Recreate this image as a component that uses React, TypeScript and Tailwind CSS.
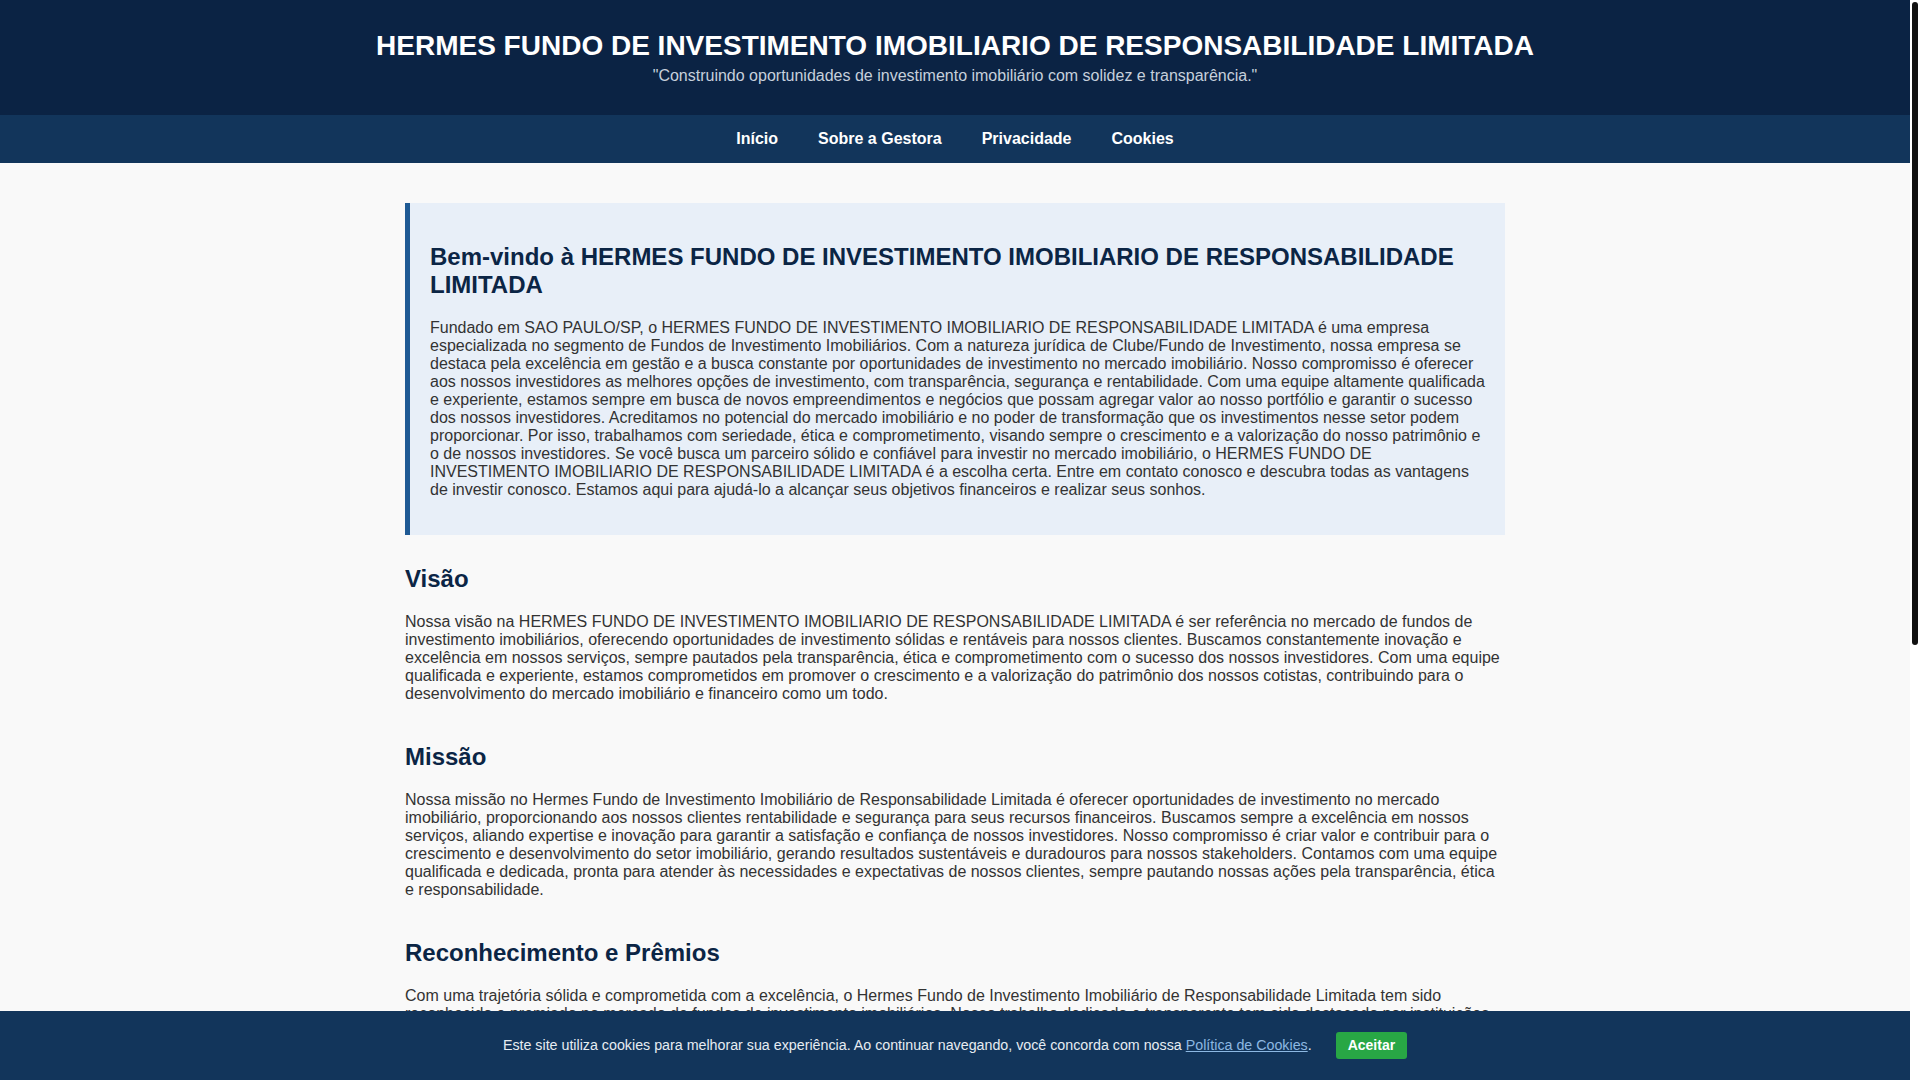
import { useState } from 'react';

const NOME = 'HERMES FUNDO DE INVESTIMENTO IMOBILIARIO DE RESPONSABILIDADE LIMITADA';

const sections = [
  {
    title: 'Visão',
    text: `Nossa visão na ${NOME} é ser referência no mercado de fundos de investimento imobiliários, oferecendo oportunidades de investimento sólidas e rentáveis para nossos clientes. Buscamos constantemente inovação e excelência em nossos serviços, sempre pautados pela transparência, ética e comprometimento com o sucesso dos nossos investidores. Com uma equipe qualificada e experiente, estamos comprometidos em promover o crescimento e a valorização do patrimônio dos nossos cotistas, contribuindo para o desenvolvimento do mercado imobiliário e financeiro como um todo.`,
  },
  {
    title: 'Missão',
    text: 'Nossa missão no Hermes Fundo de Investimento Imobiliário de Responsabilidade Limitada é oferecer oportunidades de investimento no mercado imobiliário, proporcionando aos nossos clientes rentabilidade e segurança para seus recursos financeiros. Buscamos sempre a excelência em nossos serviços, aliando expertise e inovação para garantir a satisfação e confiança de nossos investidores. Nosso compromisso é criar valor e contribuir para o crescimento e desenvolvimento do setor imobiliário, gerando resultados sustentáveis e duradouros para nossos stakeholders. Contamos com uma equipe qualificada e dedicada, pronta para atender às necessidades e expectativas de nossos clientes, sempre pautando nossas ações pela transparência, ética e responsabilidade.',
  },
  {
    title: 'Reconhecimento e Prêmios',
    text: 'Com uma trajetória sólida e comprometida com a excelência, o Hermes Fundo de Investimento Imobiliário de Responsabilidade Limitada tem sido reconhecido e premiado no mercado de fundos de investimento imobiliários. Nosso trabalho dedicado e transparente tem sido destacado por instituições renomadas do setor, que reconhecem a qualidade da nossa gestão e os resultados consistentes entregues aos nossos cotistas. Esses reconhecimentos reforçam o nosso compromisso em continuar oferecendo as melhores oportunidades de investimento, sempre com ética, responsabilidade e foco no sucesso de nossos investidores.',
  },
  {
    title: 'Nossos Valores',
    text: 'Acreditamos que a confiança é construída com transparência, ética e responsabilidade. Por isso, todas as nossas decisões de investimento são tomadas com base em análises criteriosas e em estrito cumprimento das normas regulatórias. Valorizamos o relacionamento próximo com nossos cotistas, a inovação na gestão de ativos imobiliários e a busca contínua por resultados sustentáveis de longo prazo.',
  },
  {
    title: 'Compromisso com o Investidor',
    text: 'Nosso compromisso é manter uma comunicação clara e acessível com todos os cotistas, disponibilizando relatórios periódicos sobre o desempenho do fundo, a composição da carteira e as perspectivas do mercado imobiliário. Trabalhamos para que cada investidor tenha as informações necessárias para tomar decisões conscientes e seguras.',
  },
  {
    title: 'Contato',
    text: 'Estamos à disposição para esclarecer dúvidas e apresentar as oportunidades de investimento disponíveis. Entre em contato com a nossa equipe e descubra como podemos ajudá-lo a alcançar seus objetivos financeiros com segurança e solidez.',
  },
];

export default function App() {
  const [accepted, setAccepted] = useState(false);

  return (
    <div className="bg-white">
      <div className="mr-[10px] bg-[#f9f9f9] font-['Liberation_Sans',Arial,sans-serif] text-[#333]">
        <header className="bg-[#0b2344] pt-[30px] pb-[30px] text-center">
          <h1 className="text-[28px] leading-[32px] font-bold text-white">{NOME}</h1>
          <p className="mt-[5px] text-[16px] leading-[18px] text-[#c6d0dc]">
            "Construindo oportunidades de investimento imobiliário com solidez e transparência."
          </p>
        </header>

        <nav className="bg-[#12355b] h-[48px] flex items-center justify-center gap-10">
          {['Início', 'Sobre a Gestora', 'Privacidade', 'Cookies'].map((l) => (
            <a key={l} href="#" className="text-[16px] font-bold text-white">
              {l}
            </a>
          ))}
        </nav>

        <main className="max-w-[1100px] mx-auto pt-10 pb-[60px]">
          <div className="bg-[#e8eff8] border-l-[5px] border-[#1f5a94] px-5 pt-5 pb-5 mb-[30px]">
            <h2 className="mt-5 mb-5 text-[24px] leading-[28px] font-bold text-[#0b2545]">
              Bem-vindo à {NOME}
            </h2>
            <p className="mb-4 text-[16px] leading-[18px]">
              Fundado em SAO PAULO/SP, o {NOME} é uma empresa especializada no segmento de Fundos de Investimento
              Imobiliários. Com a natureza jurídica de Clube/Fundo de Investimento, nossa empresa se destaca pela
              excelência em gestão e a busca constante por oportunidades de investimento no mercado imobiliário. Nosso
              compromisso é oferecer aos nossos investidores as melhores opções de investimento, com transparência,
              segurança e rentabilidade. Com uma equipe altamente qualificada e experiente, estamos sempre em busca de
              novos empreendimentos e negócios que possam agregar valor ao nosso portfólio e garantir o sucesso dos
              nossos investidores. Acreditamos no potencial do mercado imobiliário e no poder de transformação que os
              investimentos nesse setor podem proporcionar. Por isso, trabalhamos com seriedade, ética e
              comprometimento, visando sempre o crescimento e a valorização do nosso patrimônio e o de nossos
              investidores. Se você busca um parceiro sólido e confiável para investir no mercado imobiliário, o {NOME}{' '}
              é a escolha certa. Entre em contato conosco e descubra todas as vantagens de investir conosco. Estamos
              aqui para ajudá-lo a alcançar seus objetivos financeiros e realizar seus sonhos.
            </p>
          </div>

          {sections.map((s) => (
            <section key={s.title} className="mb-10">
              <h2 className="mb-5 text-[24px] leading-[28px] font-bold text-[#0b2545]">{s.title}</h2>
              <p className="text-[16px] leading-[18px]">{s.text}</p>
            </section>
          ))}
        </main>

        <footer className="bg-[#0b2344] py-[50px] text-center text-[14px] leading-[24px] text-[#c6d0dc]">
          <p className="font-bold text-white">{NOME}</p>
          <p>SAO PAULO/SP</p>
          <p>© 2024 Todos os direitos reservados.</p>
        </footer>
      </div>

      {/* scrollbar as shown in the capture */}
      <div className="fixed top-0 right-0 bottom-0 w-[10px] bg-white">
        <div className="ml-[2px] mt-[2px] w-[6px] h-[643px] rounded-full bg-[#111]" />
      </div>

      {!accepted && (
        <div className="fixed bottom-0 left-0 right-[10px] h-[69px] bg-[#12355b] flex items-center justify-center font-['Liberation_Sans',Arial,sans-serif] text-[14.25px] text-[#e6ecf2]">
          <span>
            Este site utiliza cookies para melhorar sua experiência. Ao continuar navegando, você concorda com nossa{' '}
            <a href="#" className="text-[#8db8e2] underline">
              Política de Cookies
            </a>
            .
          </span>
          <button
            onClick={() => setAccepted(true)}
            className="ml-[24px] h-[27px] px-3 rounded-[3px] bg-[#28a745] text-white text-[14px] font-bold"
          >
            Aceitar
          </button>
        </div>
      )}
    </div>
  );
}
